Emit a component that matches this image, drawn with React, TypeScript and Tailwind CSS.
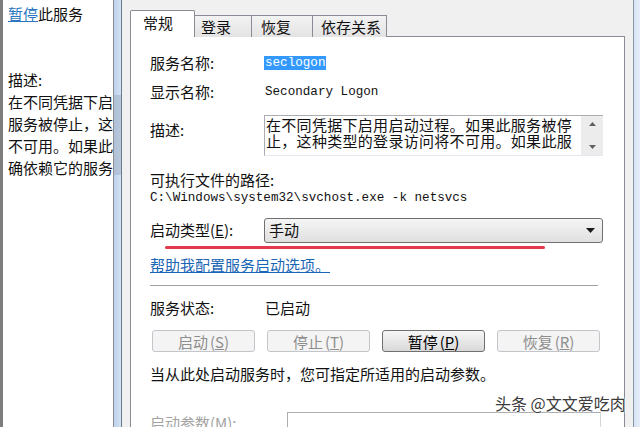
const CJK = "font-['Noto_Sans_CJK_SC','Noto_Sans',sans-serif]";
const MONO = "font-['Liberation_Mono','Noto_Sans_CJK_SC',monospace]";

const tabs = [
  { label: "登录", w: "w-[58px]", pl: "pl-[6px]" },
  { label: "恢复", w: "w-[62px]", pl: "pl-[9px]" },
  { label: "依存关系", w: "w-[75px]", pl: "pl-[8px]" },
];

function Button({ label, hot, disabled }: { label: string; hot: string; disabled?: boolean }) {
  return (
    <div
      className={`w-[103px] h-[22px] rounded-[3px] border flex items-center justify-center text-[15px] leading-none ${
        disabled
          ? "border-[#c2c5c9] bg-[#f4f4f4] text-[#8e8e8e]"
          : "border-[#707070] bg-gradient-to-b from-[#f6f6f6] via-[#e8e8e8] to-[#d8d8d8] text-black"
      }`}
    >
      {label}
      <span className="ml-[2px]">
        (<span className="underline">{hot}</span>)
      </span>
    </div>
  );
}

export default function App() {
  return (
    <div className={`relative w-[640px] h-[427px] overflow-hidden flex bg-[#f0f0f0] ${CJK} text-[15px] text-[#111]`}>
      {/* left description pane */}
      <div className="w-[114px] shrink-0 h-full bg-white border-l-[3px] border-l-[#7d7d7d] border-r border-r-[#8f8f8f] overflow-hidden">
        <div className="pl-[5px] pt-[3px] whitespace-nowrap leading-[22px]">
          <div>
            <span className="text-[#2a76c0] underline">暂停</span>此服务
          </div>
          <div className="mt-[44px]">描述:</div>
          <div>在不同凭据下启</div>
          <div>服务被停止，这</div>
          <div>不可用。如果此</div>
          <div>确依赖它的服务</div>
        </div>
      </div>

      {/* window frame strip */}
      <div className="w-[7px] shrink-0 h-full bg-gradient-to-r from-[#bcd2ec] to-[#d3e2f4] flex flex-col">
        <div className="mt-[95px] h-[80px] bg-[#a7b6c9] opacity-60" />
      </div>

      {/* properties dialog */}
      <div className="flex-1 h-full border-l border-[#6b7a8c] pl-[8px] pr-[8px] pt-[10px] flex flex-col">
        <div className="flex items-end h-[27px] relative z-10">
          <div className="w-[65px] h-[27px] bg-white border border-b-0 border-[#898c95] rounded-t-[2px] pl-[12px] pt-[2px] leading-[20px]">
            常规
          </div>
          {tabs.map((t) => (
            <div
              key={t.label}
              className={`${t.w} ${t.pl} h-[22px] -ml-px first:ml-0 border border-b-0 border-[#898c95] bg-gradient-to-b from-[#f3f3f3] to-[#e3e3e3] leading-[22px]`}
            >
              {t.label}
            </div>
          ))}
        </div>

        <div className="relative flex-1 bg-white border border-[#898c95] -mt-px pl-[19px] pr-[21px] pt-[16px] flex flex-col">
          <div className="flex h-[20px] items-center">
            <div className="w-[114px]">服务名称:</div>
            <span className={`${MONO} text-[12.6px] leading-[14px] px-px bg-[#3399ff] text-white`}>seclogon</span>
          </div>

          <div className="flex h-[20px] items-center mt-[9px]">
            <div className="w-[115px]">显示名称:</div>
            <span className={`${MONO} text-[12.6px]`}>Secondary Logon</span>
          </div>

          <div className="flex mt-[13px]">
            <div className="w-[114px] mt-[5px] leading-[20px]">描述:</div>
            <div className="flex-1 h-[41px] border border-[#abadb3] border-b-[#e3e9ef] border-r-0 flex">
              <div className="flex-1 pl-px pt-px text-[15px] leading-[16px] whitespace-nowrap overflow-hidden tracking-[0.3px]">
                <div>在不同凭据下启用启动过程。如果此服务被停</div>
                <div>止，这种类型的登录访问将不可用。如果此服</div>
              </div>
              <div className="w-[22px] bg-[#ececec] flex flex-col items-center justify-between py-[6px]">
                <svg width="7" height="4" viewBox="0 0 7 4"><path d="M3.5 0 L7 4 L0 4 Z" fill="#606060" /></svg>
                <svg width="7" height="4" viewBox="0 0 7 4"><path d="M0 0 L7 0 L3.5 4 Z" fill="#606060" /></svg>
              </div>
            </div>
          </div>

          <div className="mt-[14px] leading-[20px]">可执行文件的路径:</div>
          <div className={`${MONO} text-[12.6px] leading-[16px] whitespace-nowrap`}>
            C:\Windows\system32\svchost.exe -k netsvcs
          </div>

          <div className="relative flex items-center mt-[12px]">
            <div className="w-[114px]">
              启动类型(<span className="underline">E</span>):
            </div>
            <div className="flex-1 h-[25px] rounded-[3px] border border-[#707070] bg-gradient-to-b from-[#f5f5f5] to-[#e0e0e0] flex items-center pl-[4px] pr-[7px]">
              <span className="flex-1">手动</span>
              <svg width="9" height="5" viewBox="0 0 9 5"><path d="M0 0 L9 0 L4.5 5 Z" fill="#1a1a1a" /></svg>
            </div>
            <div className="absolute left-[15px] top-[28px] w-[380px] h-[3px] rounded-full bg-[#e23a4c]" />
          </div>

          <div className="mt-[12px] leading-[20px]">
            <span className="text-[#1b67b5] underline">帮助我配置服务启动选项。</span>
          </div>

          <div className="mt-[10px] w-[448px] h-px bg-[#a0a0a0]" />

          <div className="flex h-[20px] items-center mt-[12px]">
            <div className="w-[115px]">服务状态:</div>
            <span>已启动</span>
          </div>

          <div className="flex gap-[12px] mt-[12px] ml-[2px]">
            <Button label="启动" hot="S" disabled />
            <Button label="停止" hot="T" disabled />
            <Button label="暂停" hot="P" />
            <Button label="恢复" hot="R" disabled />
          </div>

          <div className="mt-[12px] leading-[20px] whitespace-nowrap">当从此处启动服务时，您可指定所适用的启动参数。</div>

          <div className="flex items-start mt-[28px]">
            <div className="w-[137px] mt-px leading-[20px] text-[#a3a3a3]">
              启动参数(<span className="underline">M</span>):
            </div>
            <div className="w-[314px] h-[24px] border border-[#abadb3] border-r-[#d5d5d5]" />
          </div>
        </div>
      </div>

      {/* right window frame */}
      <div className="w-[7px] shrink-0 h-full border-l border-[#8a96a6] bg-gradient-to-r from-[#d6e4f4] to-[#e6eef8]" />

      {/* watermark */}
      <div className="absolute left-[495px] top-[394px] text-[16px] leading-[18px] text-[#3b3b3b] whitespace-nowrap [text-shadow:0_0_2px_#fff,0_0_2px_#fff,0_0_1px_#fff]">
        头条 @文文爱吃肉
      </div>
    </div>
  );
}
